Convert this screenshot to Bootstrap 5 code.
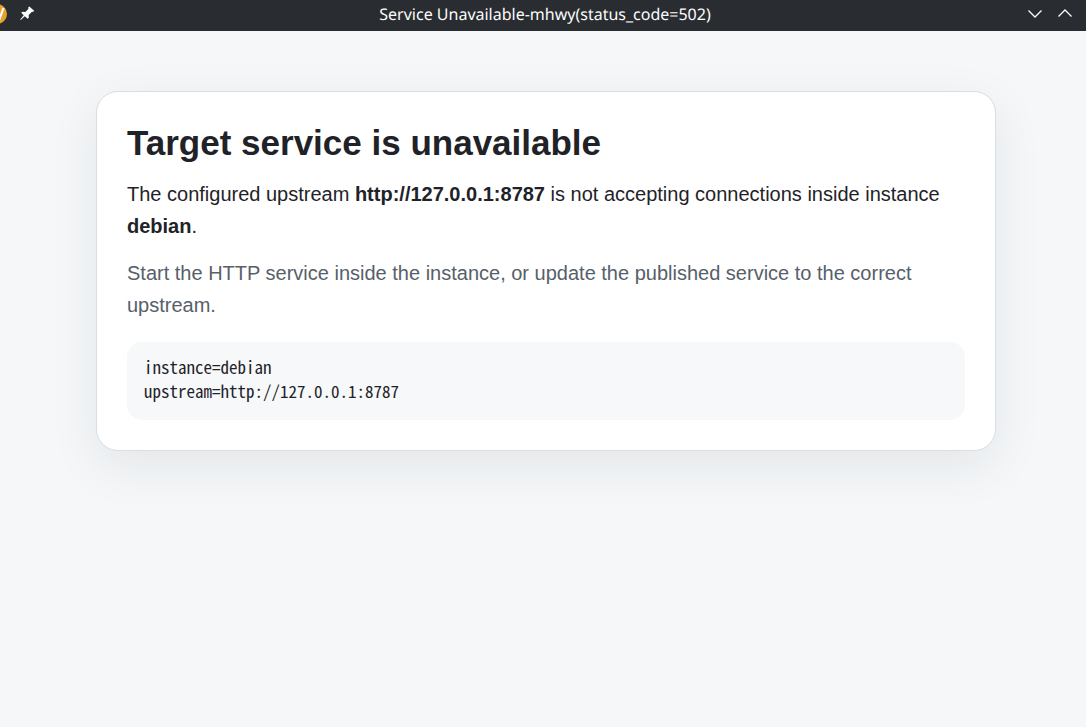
<!DOCTYPE html>
<html lang="en">
<head>
<meta charset="utf-8">
<meta name="viewport" content="width=device-width, initial-scale=1">
<title>Service Unavailable-mhwy(status_code=502)</title>
<link href="https://cdn.jsdelivr.net/npm/bootstrap@5.3.0/dist/css/bootstrap.min.css" rel="stylesheet">
<style>
body { background: #f5f7f9; color: #1f2328; font: 20px/32px "Liberation Sans", Arial, sans-serif; }
.titlebar { background: #292c30; color: #fcfcfc; height: 31px; padding-left: 4px; font: 16px/28px "Noto Sans", sans-serif; text-rendering: geometricPrecision; overflow: hidden; }
.titlebar .side { flex: 1 1 0; height: 28px; }
.titlebar button { background: none; border: 0; padding: 0; color: inherit; display: flex; }
.app-icon { margin-left: -17px; }
.window-end { margin-right: 14px; }
.page-area { padding: 60px 90px 60px 96px; }
.notice { max-width: 900px; padding: 30px; border: 1px solid #d8dee4; border-radius: 22px; background: #fff; box-shadow: 0 15px 50px rgba(31, 35, 40, .08); }
.notice h1 { font-size: 35px; line-height: 42px; font-weight: 700; margin-bottom: 14px; }
.notice p { margin-bottom: 15px; }
.notice .hint { color: #57606a; margin-bottom: 21px; }
.details { background: #f6f8fa; border-radius: 15px; padding: 13px 17px 17px; color: inherit; font: 17px/24px "Noto Sans Mono CJK SC", "Noto Sans Mono CJK JP", "Liberation Mono", monospace; }
</style>
</head>
<body>
<header class="titlebar d-flex align-items-start">
  <div class="side d-flex align-items-center gap-2">
    <svg class="app-icon flex-shrink-0" width="20" height="20" viewBox="0 0 20 20" aria-hidden="true"><circle cx="10" cy="10" r="10" fill="#e9a02c"/><path d="M12 16.500 16.500 4" stroke="#fff" stroke-width="2.200" fill="none"/></svg>
    <button type="button" class="ms-1" aria-label="Keep on top"><svg width="16" height="16" viewBox="0 0 16 16" fill="currentColor"><path d="M10.300.5 15.200 4.800 14 6 13 5.700 9.700 9 9.800 11.800 8.600 12.800 5.800 10.300 1.800 14 1.200 13.400 4.700 9.300 2.200 6.800 3.500 5.700 6.400 5.900 9.500 2.700 9.200 1.400Z"/></svg></button>
  </div>
  <div class="text-nowrap">Service Unavailable-mhwy(status_code=502)</div>
  <div class="side d-flex align-items-center justify-content-end gap-3">
    <button type="button" aria-label="Minimize"><svg width="14" height="10" viewBox="0 0 14 10" fill="none" stroke="currentColor" stroke-width="1.300"><path d="M.5 1.500 7 8 13.500 1.500"/></svg></button>
    <button type="button" class="window-end" aria-label="Maximize"><svg width="14" height="10" viewBox="0 0 14 10" fill="none" stroke="currentColor" stroke-width="1.300"><path d="M.5 7.500 7 1 13.500 7.500"/></svg></button>
  </div>
</header>
<main class="page-area">
  <section class="notice mx-auto">
    <h1>Target service is unavailable</h1>
    <p>The configured upstream <strong>http://127.0.0.1:8787</strong> is not accepting connections inside instance <strong>debian</strong>.</p>
    <p class="hint">Start the HTTP service inside the instance, or update the published service to the correct upstream.</p>
    <pre class="details mb-0">instance=debian
upstream=http://127.0.0.1:8787</pre>
  </section>
</main>
<script src="https://cdn.jsdelivr.net/npm/bootstrap@5.3.0/dist/js/bootstrap.bundle.min.js"></script>
</body>
</html>
